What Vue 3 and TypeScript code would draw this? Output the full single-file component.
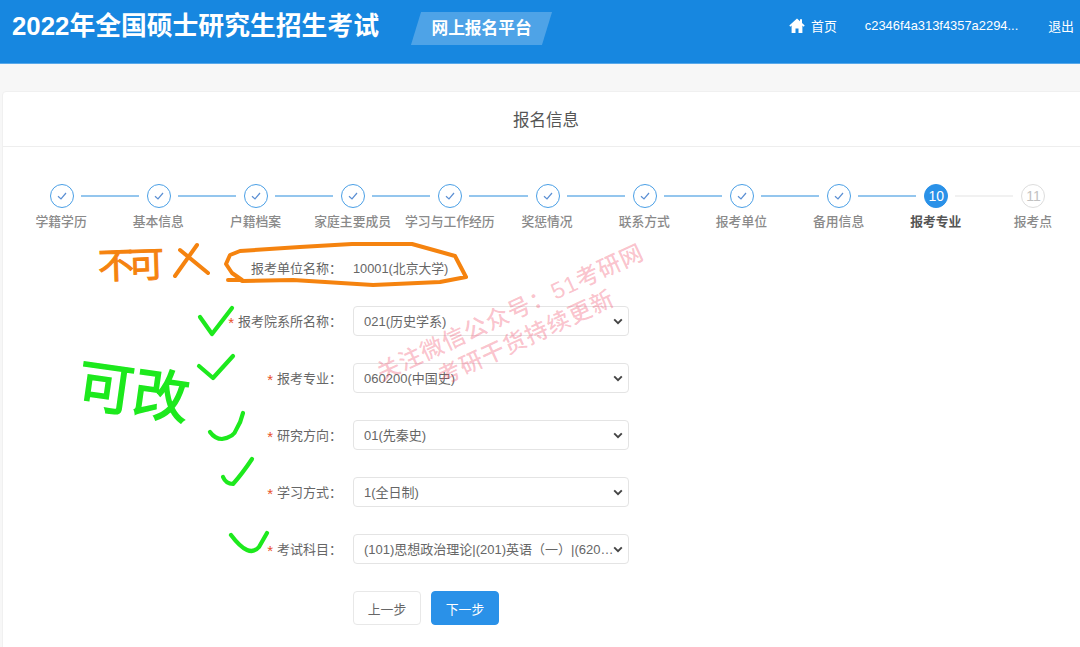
<script setup lang="ts">
import { reactive } from 'vue'

interface Step { label: string; state: 'done' | 'active' | 'todo' }
interface Field { key: string; label: string; options: string[] }

const stepNames = ['学籍学历', '基本信息', '户籍档案', '家庭主要成员', '学习与工作经历', '奖惩情况', '联系方式', '报考单位', '备用信息', '报考专业', '报考点']
const steps: Step[] = stepNames.map((label, i) => ({
  label,
  state: i < 9 ? 'done' : i === 9 ? 'active' : 'todo'
}))

const fields: Field[] = [
  { key: 'dept', label: '报考院系所名称：', options: ['021(历史学系)'] },
  { key: 'major', label: '报考专业：', options: ['060200(中国史)'] },
  { key: 'dir', label: '研究方向：', options: ['01(先秦史)'] },
  { key: 'mode', label: '学习方式：', options: ['1(全日制)'] },
  { key: 'subj', label: '考试科目：', options: ['(101)思想政治理论|(201)英语（一）|(620)中国历史综合|(无)'] }
]
const form = reactive<Record<string, string>>(
  Object.fromEntries(fields.map(f => [f.key, f.options[0]]))
)
</script>

<template>
  <div class="page">
    <header class="top">
      <h1 class="brand">2022年全国硕士研究生招生考试</h1>
      <div class="tag"><span>网上报名平台</span></div>
      <nav class="nav">
        <a class="home">
          <svg width="16" height="15" viewBox="0 0 16 15"><path d="M8 0.5 0.3 7.6l1 1.1L2.6 7.6V15h3.9v-4.6h3V15h3.9V7.6l1.3 1.1 1-1.1L13 5.1V1.2h-2v2.1z" fill="#fff"/></svg>
          <span>首页</span>
        </a>
        <span class="user">c2346f4a313f4357a2294...</span>
        <a class="quit">退出</a>
      </nav>
    </header>

    <main class="card">
      <div class="card-title">报名信息</div>
      <ol class="steps">
        <li v-for="(s, i) in steps" :key="s.label" class="step" :class="s.state">
          <div class="head">
            <i class="line" :class="{ hidden: i === 0 }"></i>
            <span class="dot">
              <svg v-if="s.state === 'done'" width="12" height="12" viewBox="0 0 12 12"><path d="M2 6.2 5 9l5-6" fill="none" stroke="#5b8fd3" stroke-width="1.2"/></svg>
              <template v-else>{{ i + 1 }}</template>
            </span>
            <i class="line" :class="{ hidden: i === steps.length - 1 }"></i>
          </div>
          <div class="step-label">{{ s.label }}</div>
        </li>
      </ol>

      <form class="form" @submit.prevent>
        <div class="row first">
          <label class="lab">报考单位名称：</label>
          <span class="val">10001(北京大学)</span>
        </div>
        <div v-for="f in fields" :key="f.key" class="row">
          <label class="lab"><em>*</em>{{ f.label }}</label>
          <div class="sel-wrap">
            <select v-model="form[f.key]" class="sel">
              <option v-for="o in f.options" :key="o" :value="o">{{ o }}</option>
            </select>
            <svg class="chev" width="10" height="7" viewBox="0 0 10 7"><path d="M1.2 1.4 5 5.2l3.8-3.8" fill="none" stroke="#444" stroke-width="1.9"/></svg>
          </div>
        </div>
        <div class="actions">
          <button type="button" class="btn">上一步</button>
          <button type="button" class="btn primary">下一步</button>
        </div>
      </form>
    </main>

    <div class="mark">
      <div class="wm wm1">关注微信公众号：51考研网</div>
      <div class="wm wm2">考研干货持续更新</div>
      <div class="hand orange">不可</div>
      <div class="hand green">可改</div>
      <svg class="ink" width="1080" height="647" viewBox="0 0 1080 647">
        <g fill="none" stroke="#f5830f" stroke-width="4" stroke-linecap="round" stroke-linejoin="round">
          <path d="M228 280H242L232 273 226 264 230 255 240 251 300 247 352 244 412 244 455 256 466 277 440 282 373 285 293 280 242 281"/>
          <path d="M197 245 175 276M180 250 208 273"/>
        </g>
        <g fill="none" stroke="#1de91d" stroke-width="4.2" stroke-linecap="round" stroke-linejoin="round">
          <path d="M200 317l12 17 20-26"/>
          <path d="M199 366l14 12 20-22"/>
          <path d="M210 432q5 7 12 7 12-2 14-9 5-8 7-17"/>
          <path d="M223 477q3 7 10 7 9-10 19-25"/>
          <path d="M231 535q9 12 16 15 7 3 12-3l8-14"/>
        </g>
      </svg>
    </div>
  </div>
</template>

<style scoped>
.page {
  position: relative;
  width: 1080px;
  height: 647px;
  overflow: hidden;
  background: #f7f7f7;
  font-family: "Liberation Sans", "Noto Sans CJK SC", sans-serif;
  color: #666;
  font-size: 13px;
}
.top {
  height: 63px;
  display: flex;
  align-items: flex-start;
  background: #1787e0;
  border-bottom: 1px solid #58a9ea;
  color: #fff;
  padding-left: 12px;
}
.brand {
  margin: 9px 0 0;
  font-size: 25.8px;
  line-height: 34px;
  font-weight: 700;
  white-space: nowrap;
}
.tag {
  margin: 12px 0 0 37px;
  width: 131px;
  height: 33px;
  background: rgba(255, 255, 255, 0.24);
  transform: skewX(-17deg);
  display: flex;
  align-items: center;
  justify-content: center;
  padding-bottom: 3px;
  box-sizing: border-box;
}
.tag span {
  transform: skewX(17deg);
  font-size: 16.7px;
  font-weight: 700;
  white-space: nowrap;
}
.nav {
  margin-left: auto;
  display: flex;
  align-items: center;
  height: 51px;
  padding-right: 6px;
  font-size: 12.9px;
}
.home {
  display: flex;
  align-items: center;
  gap: 6px;
}
.home svg {
  margin-top: -1px;
}
.user {
  margin-left: 28px;
}
.quit {
  margin-left: 30px;
}
.card {
  width: 1088px;
  margin: 27px 0 0 2px;
  background: #fff;
  border: 1px solid #f0f0f0;
  border-radius: 4px 0 0 0;
  box-sizing: border-box;
  height: 600px;
}
.card-title {
  height: 54px;
  line-height: 56px;
  text-align: center;
  font-size: 16.5px;
  color: #555;
  border-bottom: 1px solid #eee;
}
.steps {
  list-style: none;
  margin: 0;
  padding: 37px 0 0 9.5px;
  display: flex;
}
.step {
  width: 97.2px;
  flex: none;
  text-align: center;
}
.head {
  display: flex;
  align-items: center;
  height: 24px;
}
.line {
  flex: 1;
  height: 2px;
  background: #94c6ee;
}
.line:first-child {
  margin-right: 8px;
}
.line:last-child {
  margin-left: 7px;
}
.line.hidden {
  visibility: hidden;
}
.dot {
  box-sizing: border-box;
  width: 24px;
  height: 24px;
  border-radius: 50%;
  border: 1px solid #4a9fe6;
  display: flex;
  align-items: center;
  justify-content: center;
  font-size: 14px;
}
.step-label {
  margin-top: 5px;
  line-height: 18px;
  font-size: 12.8px;
  color: #8a8a8a;
  font-weight: 500;
  white-space: nowrap;
}
.active .dot {
  background: #2a91e8;
  border-color: #2a91e8;
  color: #fff;
}
.active .step-label {
  color: #555;
  font-weight: 700;
}
.active .line:last-child,
.todo .line {
  background: #f1f1f1;
}
.todo .dot {
  border-color: #ddd;
  color: #c2c2c2;
}
.form {
  margin-top: 21px;
}
.row {
  display: flex;
  align-items: center;
  height: 30px;
  margin-bottom: 27px;
}
.row.first {
  margin-bottom: 24px;
}
.lab {
  width: 350px;
  flex: none;
  text-align: right;
  white-space: nowrap;
  color: #666;
  font-size: 13px;
  padding-right: 11px;
  box-sizing: border-box;
}
.lab em {
  color: #e8502a;
  font-style: normal;
  font-size: 15px;
  margin-right: 4px;
  vertical-align: -2px;
}
.val {
  color: #666;
  font-size: 12.8px;
}
.sel-wrap {
  position: relative;
  width: 276px;
  height: 30px;
}
.sel {
  display: block;
  box-sizing: border-box;
  width: 100%;
  height: 30px;
  padding: 0 13px 0 10px;
  appearance: none;
  border: 1px solid #e4e4e4;
  border-radius: 4px;
  background: #fff;
  color: #666;
  font: inherit;
  font-size: 13px;
  text-overflow: ellipsis;
}
.chev {
  position: absolute;
  right: 6px;
  top: 12px;
  pointer-events: none;
}
.actions {
  display: flex;
  gap: 10px;
  padding: 0 0 0 350px;
}
.btn {
  width: 68px;
  height: 34px;
  border: 1px solid #e8e8e8;
  border-radius: 4px;
  background: #fff;
  color: #666;
  font: inherit;
  font-size: 12.8px;
}
.btn.primary {
  background: #2a91e8;
  border-color: #2a91e8;
  color: #fff;
}
.mark {
  position: absolute;
  inset: 0;
  pointer-events: none;
}
.ink {
  position: absolute;
  left: 0;
  top: 0;
}
.wm {
  position: absolute;
  font-size: 23px;
  letter-spacing: 1px;
  line-height: 30px;
  font-weight: 500;
  color: rgba(240, 70, 100, 0.33);
  white-space: nowrap;
  transform: rotate(-25deg);
  transform-origin: left center;
}
.wm1 {
  left: 378px;
  top: 359px;
}
.wm2 {
  left: 439px;
  top: 363px;
}
.hand {
  position: absolute;
  white-space: nowrap;
  font-family: "Noto Sans CJK SC", sans-serif;
}
.orange {
  left: 98px;
  top: 238px;
  font-size: 36px;
  line-height: 48px;
  letter-spacing: -6px;
  color: #f5830f;
  -webkit-text-stroke: 1px #f5830f;
  transform: rotate(-2deg);
}
.green {
  left: 78px;
  top: 350px;
  font-size: 56px;
  line-height: 76px;
  color: #1de91d;
  -webkit-text-stroke: 1.5px #1de91d;
  transform: rotate(8deg);
}
</style>

<style>
body {
  margin: 0;
  overflow: hidden;
}
</style>
